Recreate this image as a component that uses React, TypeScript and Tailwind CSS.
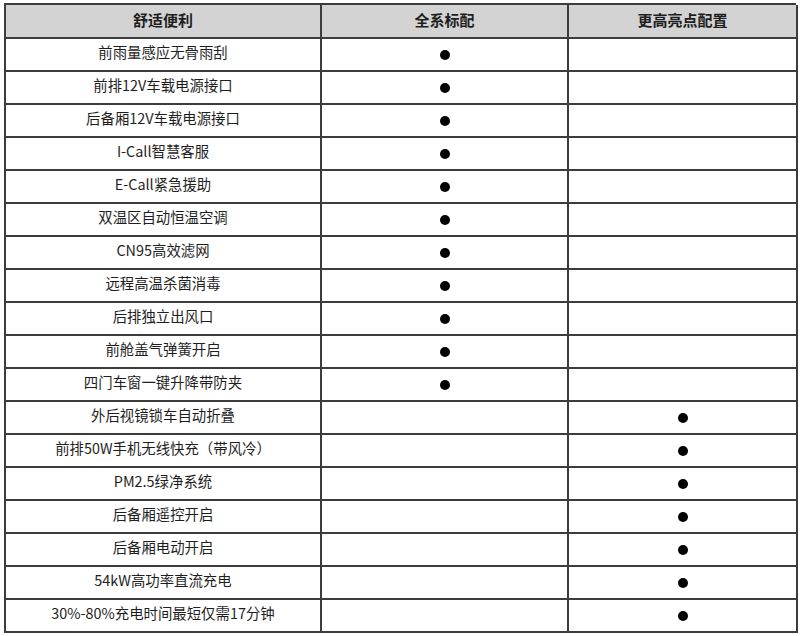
import React from "react";

const rows: [string, number][] = [
  ["前雨量感应无骨雨刮", 1],
  ["前排12V车载电源接口", 1],
  ["后备厢12V车载电源接口", 1],
  ["I-Call智慧客服", 1],
  ["E-Call紧急援助", 1],
  ["双温区自动恒温空调", 1],
  ["CN95高效滤网", 1],
  ["远程高温杀菌消毒", 1],
  ["后排独立出风口", 1],
  ["前舱盖气弹簧开启", 1],
  ["四门车窗一键升降带防夹", 1],
  ["外后视镜锁车自动折叠", 2],
  ["前排50W手机无线快充（带风冷）", 2],
  ["PM2.5绿净系统", 2],
  ["后备厢遥控开启", 2],
  ["后备厢电动开启", 2],
  ["54kW高功率直流充电", 2],
  ["30%-80%充电时间最短仅需17分钟", 2],
];

const Dot = () => <div className="w-[10px] h-[10px] rounded-full bg-black" />;

export default function App() {
  return (
    <div className="w-[800px] h-[636px] bg-white pt-[3px] pl-[4px]" style={{ fontFamily: '"Noto Sans CJK SC", "Noto Sans", sans-serif' }}>
      <div className="grid grid-cols-[316px_247px_229px] w-[792px] border-l-2 border-t-2 border-[#3c3c3c] text-[#1e1e1e]">
        {["舒适便利", "全系标配", "更高亮点配置"].map((h) => (
          <div key={h} className="h-[34px] pb-[2px] bg-[#d3d3d3] border-r-2 border-b-2 border-[#3c3c3c] flex items-center justify-center text-[15px] font-bold">
            {h}
          </div>
        ))}
        {rows.map(([label, col]) => (
          <React.Fragment key={label}>
            <div className="h-[33px] pb-[5px] border-r-2 border-b-2 border-[#3c3c3c] flex items-center justify-center text-[14.4px]">
              {label}
            </div>
            <div className="h-[33px] border-r-2 border-b-2 border-[#3c3c3c] flex items-center justify-center">
              {col === 1 && <Dot />}
            </div>
            <div className="h-[33px] border-r-2 border-b-2 border-[#3c3c3c] flex items-center justify-center">
              {col === 2 && <Dot />}
            </div>
          </React.Fragment>
        ))}
      </div>
    </div>
  );
}
